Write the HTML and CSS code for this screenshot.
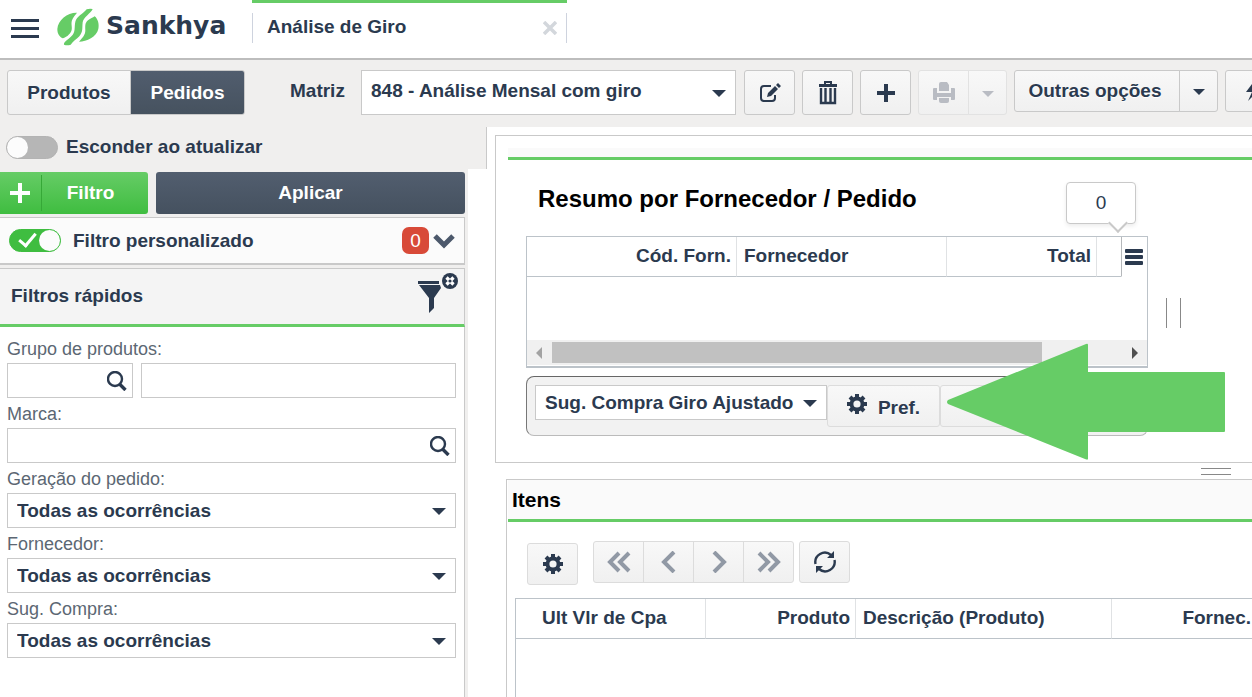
FILE: index.html
```html
<!DOCTYPE html>
<html lang="pt-BR">
<head>
    <meta charset="UTF-8">
    <meta name="viewport" content="width=device-width, initial-scale=1.0">
    <title>Análise de Giro</title>
    <link rel="stylesheet" href="styles.css">
</head>
<body>
    <!-- Shared icons -->
    <svg class="sprite" aria-hidden="true">
        <symbol id="search" viewBox="0 0 20 20">
            <circle cx="8" cy="8" r="7" fill="none" stroke="currentColor" stroke-width="2.4"/>
            <path d="M12.500 13l6 6" stroke="currentColor" stroke-width="3.400"/>
        </symbol>
        <symbol id="gear" viewBox="0 0 20 20">
            <path fill="none" stroke="currentColor" stroke-width="4" d="M10 0v4M10 16v4M0 10h4M16 10h4M3 3l3 3M14 14l3 3M17 3l-3 3M6 14l-3 3"/>
            <circle cx="10" cy="10" r="5.500" fill="none" stroke="currentColor" stroke-width="3.800"/>
        </symbol>
    </svg>

    <header class="topbar">
        <button class="menu-button" aria-label="Menu"><span></span><span></span><span></span></button>
        <a class="logo" href="#">
            <svg width="44" height="40" viewBox="170 22 132 120" fill="#66cc66">
                <path d="M233 39C205 38 176 60 174 88C174 103 181 112 190 116C200 114 212 104 216 94C220 84 214 74 218 62C221 52 228 46 233 39Z"/>
                <path d="M262 29Q270 26 280 28C274 42 252 52 250 68C248 84 252 96 240 110C230 120 222 124 214 135Q204 138 194 135C192 128 206 120 216 110C230 96 224 84 228 66C232 50 252 42 262 29Z"/>
                <path d="M286 50C296 58 300 74 297 88C292 112 262 126 239 126C250 114 258 106 258 92C258 80 256 70 266 62C274 56 280 54 286 50Z"/>
            </svg>
            <span>Sankhya</span>
        </a>
        <div class="tab">
            <div class="tab-inner">
                <span>Análise de Giro</span>
                <button class="tab-close" aria-label="Fechar">
                    <svg width="14" height="14" viewBox="0 0 14 14"><path d="M1 1l12 12M13 1L1 13" stroke="#d3d7dc" stroke-width="3.500"/></svg>
                </button>
            </div>
        </div>
    </header>

    <div class="toolbar">
        <div class="group views">
            <button class="btn">Produtos</button>
            <button class="btn dark">Pedidos</button>
        </div>
        <label class="matriz-label" for="matriz">Matriz</label>
        <div class="select matriz">
            <select id="matriz"><option>848 - Análise Mensal com giro</option></select>
        </div>
        <div class="tools">
            <button class="btn icon" aria-label="Editar">
                <svg width="22" height="20" viewBox="0 0 22 20">
                    <path d="M12 3H5Q2 3 2 6v9q0 3 3 3h8q3 0 3-3v-3" fill="none" stroke="currentColor" stroke-width="2"/>
                    <path d="M8 14l1-4 7-7 3 3-7 7zM17 2l2-2 3 3-2 2z" fill="currentColor"/>
                </svg>
            </button>
            <button class="btn icon" aria-label="Excluir">
                <svg width="18" height="24" viewBox="0 0 18 24" fill="none" stroke="currentColor">
                    <path d="M6 3V1h6v2" stroke-width="2"/>
                    <path d="M0 4.500h18" stroke-width="3"/>
                    <path d="M2 7v15h14V7M6.500 7v14M11.500 7v14" stroke-width="2.400"/>
                </svg>
            </button>
            <button class="btn icon" aria-label="Adicionar">
                <svg width="18" height="18" viewBox="0 0 18 18"><path d="M9 0v18M0 9h18" stroke="currentColor" stroke-width="4"/></svg>
            </button>
            <div class="group disabled">
                <button class="btn icon" disabled aria-label="Imprimir">
                    <svg width="22" height="21" viewBox="0 0 22 21" fill="currentColor">
                        <path d="M6 9V2q0-2 2-2h6l2 3v6z"/>
                        <path d="M0 7q0-1 1-1h3v5h14V6h3q1 0 1 1v10q0 1-1 1h-3v-3H4v3H1q-1 0-1-1z"/>
                        <path d="M6 16h10v3q0 2-2 2H8q-2 0-2-2z"/>
                    </svg>
                </button>
                <button class="btn caret" disabled aria-label="Opções de impressão"></button>
            </div>
            <div class="group short">
                <button class="btn">Outras opções</button>
                <button class="btn caret" aria-label="Mais opções"></button>
            </div>
            <div class="group short">
                <button class="btn icon wide" aria-label="Ações">
                    <svg width="16" height="22" viewBox="0 0 16 22"><path d="M9 0L0 12h6L2 21 14 9H8l4-9z" fill="currentColor"/></svg>
                </button>
            </div>
        </div>
    </div>

    <div class="page">
        <aside class="sidebar">
            <div class="hide-row">
                <input type="checkbox" class="switch" id="hide">
                <label for="hide">Esconder ao atualizar</label>
            </div>
            <div class="filters">
                <div class="filter-actions">
                    <button class="btn-filtro">
                        <span class="plus"><svg width="20" height="20" viewBox="0 0 20 20"><path d="M10 0v20M0 10h20" stroke="#fff" stroke-width="4"/></svg></span>
                        <span class="txt">Filtro</span>
                    </button>
                    <button class="btn-aplicar">Aplicar</button>
                </div>
                <div class="custom-filter">
                    <input type="checkbox" class="switch" id="custom" checked>
                    <label for="custom">Filtro personalizado</label>
                    <span class="badge">0</span>
                    <button class="expand" aria-label="Expandir">
                        <svg width="22" height="16" viewBox="0 0 22 16"><path d="M2 3l9 9 9-9" fill="none" stroke="#4c586b" stroke-width="5"/></svg>
                    </button>
                </div>
                <div class="quick-head">
                    <h2>Filtros rápidos</h2>
                    <button aria-label="Limpar filtros">
                        <svg width="40" height="42" viewBox="0 0 40 42">
                            <path d="M0 9h21v3H0zM1 13h21l1 3-7 10v10l-5 5V26z" fill="currentColor"/>
                            <circle cx="32" cy="9" r="8" fill="currentColor"/>
                            <path d="M28.500 5.500l7 7M35.500 5.500l-7 7" stroke="#fff" stroke-width="3.200"/>
                            <circle cx="32" cy="9" r="1.600" fill="currentColor"/>
                        </svg>
                    </button>
                </div>
                <form class="quick-filters">
                    <label for="grupo">Grupo de produtos:</label>
                    <div class="row">
                        <div class="field code">
                            <input type="text" id="grupo">
                            <button type="button" aria-label="Pesquisar grupo"><svg width="20" height="20"><use href="#search"/></svg></button>
                        </div>
                        <div class="field"><input type="text" aria-label="Descrição do grupo"></div>
                    </div>
                    <label for="marca">Marca:</label>
                    <div class="field">
                        <input type="text" id="marca">
                        <button type="button" aria-label="Pesquisar marca"><svg width="20" height="20"><use href="#search"/></svg></button>
                    </div>
                    <label for="geracao">Geração do pedido:</label>
                    <div class="select"><select id="geracao"><option>Todas as ocorrências</option></select></div>
                    <label for="fornecedor">Fornecedor:</label>
                    <div class="select"><select id="fornecedor"><option>Todas as ocorrências</option></select></div>
                    <label for="sug">Sug. Compra:</label>
                    <div class="select"><select id="sug"><option>Todas as ocorrências</option></select></div>
                </form>
            </div>
        </aside>

        <main class="content">
            <section class="panel resumo">
                <div class="strip"></div>
                <div class="resumo-body">
                    <div class="resumo-main">
                        <h1>Resumo por Fornecedor / Pedido</h1>
                        <div class="grid">
                            <table>
                                <colgroup><col class="c-cod"><col class="c-forn"><col class="c-total"><col class="c-pad"><col></colgroup>
                                <thead>
                                    <tr>
                                        <th class="right">Cód. Forn.</th>
                                        <th>Fornecedor</th>
                                        <th class="right">Total</th>
                                        <th class="pad"></th>
                                        <th class="menu-cell">
                                            <button class="grid-menu" aria-label="Colunas"><span></span><span></span><span></span></button>
                                            <div class="tip">0</div>
                                        </th>
                                    </tr>
                                </thead>
                            </table>
                            <div class="scrollbar"><i class="left"></i><div class="track"><div class="thumb"></div></div><i class="next"></i></div>
                        </div>
                        <div class="footer-bar">
                            <div class="select sugestao">
                                <select aria-label="Sugestão"><option>Sug. Compra Giro Ajustado</option></select>
                            </div>
                            <button class="btn light pref"><svg width="20" height="20"><use href="#gear"/></svg><span>Pref.</span></button>
                            <button class="btn light blank" aria-label="Gerar"></button>
                            <svg class="arrow" width="279" height="117" viewBox="0 0 279 117" aria-hidden="true">
                                <path d="M1 57L139 1Q141 0 141 2V29H277Q278 29 278 30V88Q278 89 277 89H141V116Q141 117 138 116L1 61Q-1 59 1 57Z" fill="#66cc66"/>
                            </svg>
                        </div>
                    </div>
                    <div class="split-v"></div>
                </div>
            </section>
            <div class="split-h"><span></span></div>
            <section class="panel itens">
                <h2>Itens</h2>
                <div class="itens-tools">
                    <button class="btn light icon gear-btn" aria-label="Configurar"><svg width="20" height="20"><use href="#gear"/></svg></button>
                    <div class="group nav">
                        <button class="btn light" aria-label="Primeiro"><svg width="24" height="22" viewBox="0 0 24 22"><path d="M12 2L3 11l9 9M22 2l-9 9 9 9"/></svg></button>
                        <button class="btn light" aria-label="Anterior"><svg width="24" height="22" viewBox="0 0 24 22"><path d="M17 1L7 11l10 10"/></svg></button>
                        <button class="btn light" aria-label="Próximo"><svg width="24" height="22" viewBox="0 0 24 22"><path d="M7 1l10 10L7 21"/></svg></button>
                        <button class="btn light" aria-label="Último"><svg width="24" height="22" viewBox="0 0 24 22"><path d="M2 2l9 9-9 9M12 2l9 9-9 9"/></svg></button>
                    </div>
                    <button class="btn light icon" aria-label="Atualizar">
                        <svg width="22" height="22" viewBox="0 0 22 22">
                            <path d="M1.500 13A9.500 9.500 0 0 1 17 4M20.500 9A9.500 9.500 0 0 1 5 18" fill="none" stroke="currentColor" stroke-width="2.400"/>
                            <path d="M20 0v7h-7zM2 22v-7h7z" fill="currentColor"/>
                        </svg>
                    </button>
                </div>
                <div class="itens-grid">
                    <table>
                        <colgroup><col class="c-ult"><col class="c-prod"><col class="c-desc"><col></colgroup>
                        <thead>
                            <tr>
                                <th class="indent">Ult Vlr de Cpa</th>
                                <th class="right">Produto</th>
                                <th>Descrição (Produto)</th>
                                <th class="right last">Fornec.</th>
                            </tr>
                        </thead>
                    </table>
                </div>
            </section>
        </main>
    </div>
</body>
</html>
```
FILE: styles.css
```css
* {
    box-sizing: border-box;
}
body {
    margin: 0;
    min-height: 100vh;
    display: flex;
    flex-direction: column;
    overflow: hidden;
    background: #fff;
    color: #2b3a4f;
    font: bold 19px "Liberation Sans", Arial, sans-serif;
}
button, input, select {
    font: inherit;
    color: inherit;
    margin: 0;
    padding: 0;
    border: 0;
    background: none;
}
svg {
    display: block;
    flex: none;
}
h1, h2 {
    margin: 0;
}
.sprite {
    position: absolute;
    width: 0;
    height: 0;
}

/* Top bar */
.topbar {
    display: flex;
    height: 60px;
    border-bottom: 2px solid #bdbdbd;
}
.menu-button {
    display: flex;
    flex-direction: column;
    gap: 5px;
    width: 28px;
    margin: 19px 0 0 11px;
}
.menu-button span {
    height: 3px;
    background: #2b3a4f;
}
.logo {
    display: flex;
    gap: 6px;
    width: 196px;
    margin-left: 17px;
    padding-top: 7px;
    color: #2b3a4f;
    font: bold 25px/38px "DejaVu Sans", sans-serif;
    text-decoration: none;
}
.tab {
    width: 315px;
    border-top: 3px solid #66cc66;
}
.tab-inner {
    display: flex;
    justify-content: space-between;
    align-items: center;
    height: 30px;
    margin-top: 10px;
    padding: 0 9px 0 14px;
    border: solid #ced3de;
    border-width: 0 1px;
}
.tab-inner span {
    line-height: 28px;
    padding-bottom: 2px;
}

/* Buttons */
.btn {
    display: flex;
    align-items: center;
    justify-content: center;
    height: 45px;
    border: 1px solid #c9c9c9;
    border-radius: 3px;
    background: linear-gradient(#f8f8f8, #f0f0f0);
    text-shadow: 0 1px 1px #fff;
}
.btn.icon {
    width: 51px;
}
.btn.wide {
    width: 57px;
}
.btn.dark {
    color: #fff;
    background: linear-gradient(#515d6e, #46525f);
    text-shadow: none;
}
.btn.light {
    height: 42px;
    border-color: #dcdcdc;
}
.btn.caret {
    width: 39px;
}
.btn.caret::after, .select::after {
    content: "";
    border: solid transparent;
    border-width: 7px 7px 0;
    border-top-color: #2b3a4f;
}
.btn.caret::after {
    border-width: 6px 6px 0;
    margin-top: 2px;
}
.group {
    display: flex;
    flex: none;
}
.group .btn + .btn {
    margin-left: -1px;
    border-top-left-radius: 0;
    border-bottom-left-radius: 0;
}
.group .btn:not(:last-child) {
    border-top-right-radius: 0;
    border-bottom-right-radius: 0;
}
.short .btn {
    height: 42px;
}
.short .btn:first-child:not(.icon) {
    width: 166px;
    padding-right: 4px;
}
.disabled .btn {
    color: #b9bcc3;
    border-color: #e2e2e2;
}
.disabled .btn.caret::after {
    border-top-color: #b9bcc3;
}

/* Selects */
.select {
    position: relative;
    height: 35px;
    border: 1px solid #c9c9c9;
    background: #fff;
}
.select select {
    appearance: none;
    width: 100%;
    height: 100%;
    padding: 0 32px 0 9px;
}
.select::after {
    position: absolute;
    right: 9px;
    top: 50%;
    margin-top: -3px;
    pointer-events: none;
}

/* Toolbar */
.toolbar {
    display: flex;
    height: 67px;
    padding: 10px 0 0 7px;
    background: #f0efee;
}
.views .btn {
    width: 124px;
}
.views .dark {
    width: 115px;
}
.matriz-label {
    flex: none;
    width: 71px;
    margin-left: 45px;
    line-height: 41px;
}
.matriz {
    flex: none;
    width: 375px;
    height: 45px;
}
.matriz select {
    padding-bottom: 4px;
}
.tools {
    display: flex;
    gap: 7px;
    margin-left: 8px;
}
.tools .btn {
    flex: none;
}

/* Page */
.page {
    display: flex;
    flex: 1;
}
.sidebar {
    display: flex;
    flex-direction: column;
    flex: none;
    width: 487px;
}
.hide-row {
    display: flex;
    align-items: center;
    gap: 8px;
    height: 42px;
    padding: 0 0 2px 6px;
    border-right: 1px solid #c9c9c9;
    background: #f0efee;
}
.switch {
    appearance: none;
    flex: none;
    display: flex;
    align-items: center;
    width: 52px;
    height: 23px;
    border: 1px solid #b3b3b3;
    border-radius: 12px;
    background: #b6b6b6;
}
.switch::after {
    content: "";
    width: 21px;
    height: 21px;
    border-radius: 50%;
    background: #fcfcfc;
}
.switch:checked {
    justify-content: space-between;
    border-color: #3fbd40;
    background: #3fbd40;
}
.switch:checked::before {
    content: "";
    width: 14px;
    height: 7px;
    margin: -5px 0 0 9px;
    border: solid #fff;
    border-width: 0 0 3px 3px;
    transform: rotate(-50deg);
}
.filters {
    display: flex;
    flex-direction: column;
    gap: 3px;
    flex: 1;
    width: 468px;
    padding: 3px 3px 0 0;
    background: #f0efee;
}
.filter-actions {
    display: flex;
    gap: 8px;
    color: #fff;
    text-shadow: 0 1px 2px #30404080;
}
.btn-filtro {
    display: flex;
    align-items: center;
    width: 148px;
    height: 42px;
    border-radius: 0 3px 3px 0;
    background: linear-gradient(#66cc66, #3fbd40);
}
.plus {
    display: flex;
    align-items: center;
    width: 42px;
    height: 36px;
    padding-left: 10px;
    border-right: 1px solid #36a837;
}
.txt {
    flex: 1;
    padding-right: 9px;
}
.btn-aplicar {
    flex: 1;
    border-radius: 3px;
    background: linear-gradient(#525e6f, #45515f);
}
.custom-filter {
    display: flex;
    align-items: center;
    height: 48px;
    padding: 0 9px;
    border: solid #c9c9c9;
    border-width: 1px 1px 2px 0;
    background: #fbfbfb;
}
.custom-filter label {
    flex: 1;
    margin-left: 12px;
}
.badge {
    width: 27px;
    border-radius: 7px;
    background: #d84a38;
    color: #fff;
    font-weight: normal;
    line-height: 27px;
    text-align: center;
}
.expand {
    margin-left: 4px;
}
.quick-head {
    display: flex;
    justify-content: space-between;
    align-items: center;
    height: 59px;
    padding: 0 6px 2px 11px;
    border-top: 1px solid #c9c9c9;
    border-right: 1px solid #c9c9c9;
    border-bottom: 3px solid #66cc66;
    background: #f4f4f4;
}
.quick-head h2 {
    font-size: 19px;
}
.quick-head button {
    padding-bottom: 6px;
}
.quick-filters {
    flex: 1;
    margin-top: -3px;
    padding: 8px 8px 0 7px;
    border-right: 1px solid #c9c9c9;
    background: #fff;
}
.quick-filters label {
    display: block;
    color: #5c6773;
    font-size: 18px;
    font-weight: normal;
    line-height: 28px;
}
.quick-filters .field, .quick-filters .select {
    margin-bottom: 2px;
}
.row {
    display: flex;
    gap: 8px;
}
.row .field {
    flex: 1;
    min-width: 0;
}
.row .code {
    flex: 0 0 126px;
}
.field {
    display: flex;
    align-items: center;
    height: 35px;
    padding: 0 5px;
    border: 1px solid #c9c9c9;
}
.field input {
    flex: 1;
    min-width: 0;
    height: 100%;
}

/* Content */
.content {
    flex: 1;
    min-width: 0;
    display: flex;
    flex-direction: column;
    padding: 8px 0 0 8px;
}
.panel {
    border: solid #c9c9c9;
    border-width: 1px 0 0 1px;
}
.resumo {
    height: 328px;
    padding: 12px 0 0 12px;
    border-bottom-width: 1px;
}
.strip {
    height: 12px;
    border-bottom: 3px solid #66cc66;
    background: #fafafa;
}
.resumo-body {
    display: flex;
    align-items: center;
    gap: 18px;
    padding-left: 18px;
}
.resumo-main {
    flex: 0 1 622px;
}
h1 {
    padding: 2px 0 0 12px;
    color: #000;
    font-size: 24px;
    line-height: 74px;
}
.grid {
    display: flex;
    flex-direction: column;
    justify-content: space-between;
    height: 132px;
    border: 1px solid #bcc3c9;
    border-bottom-width: 2px;
}
table {
    width: 100%;
    table-layout: fixed;
    border-collapse: separate;
    border-spacing: 0;
}
th {
    height: 40px;
    padding: 0 5px 2px 7px;
    border-right: 1px solid #e0e2e4;
    border-bottom: 1px solid #bcc3c9;
    text-align: left;
    white-space: nowrap;
}
.right {
    text-align: right;
}
.c-cod {
    width: 210px;
}
.c-forn {
    width: 210px;
}
.c-total {
    width: 150px;
}
.c-pad {
    width: 24px;
}
.pad {
    border-right: 0;
}
.menu-cell {
    position: relative;
    padding: 0 0 0 3px;
    border-right: 0;
    border-bottom-color: transparent;
    border-left: 1px solid #b5b8bb;
}
.grid-menu {
    display: flex;
    flex-direction: column;
    gap: 2px;
    width: 18px;
}
.grid-menu span {
    height: 4px;
    border-radius: 1px;
    background: #2b3a4f;
}
.tip {
    position: absolute;
    right: 11px;
    bottom: 52px;
    width: 70px;
    border: 1px solid #c9c9c9;
    border-radius: 4px;
    background: #fff;
    box-shadow: 0 2px 4px #00000014;
    font-weight: normal;
    line-height: 40px;
    text-align: center;
}
.tip::after {
    content: "";
    position: absolute;
    right: 10px;
    bottom: -7px;
    width: 12px;
    height: 12px;
    border: solid #c9c9c9;
    border-width: 0 2px 2px 0;
    background: #fff;
    transform: rotate(45deg);
}
.scrollbar {
    display: flex;
    align-items: center;
    height: 25px;
    margin-bottom: 1px;
    padding: 0 9px;
    background: #f0f0f0;
}
.scrollbar i {
    border: solid transparent;
    border-width: 6px 0;
}
.scrollbar .left {
    border-right: 6px solid #a3a3a3;
}
.scrollbar .next {
    border-left: 6px solid #505050;
}
.track {
    flex: 1;
    padding: 0 10px;
}
.thumb {
    width: 86%;
    height: 21px;
    background: #c1c1c1;
}
.footer-bar {
    position: relative;
    display: flex;
    height: 60px;
    margin-top: 8px;
    padding: 8px;
    border: 1px solid #bbb;
    border-top-color: #666;
    border-left-color: #777;
    border-radius: 8px;
    background: #f2f2f2;
}
.sugestao {
    width: 292px;
}
.footer-bar .pref {
    gap: 11px;
    width: 113px;
}
.pref svg {
    margin-top: -4px;
}
.pref span {
    padding-top: 4px;
}
.blank {
    width: 113px;
}
.arrow {
    position: absolute;
    left: 420px;
    top: -34px;
}
.split-v {
    width: 15px;
    height: 30px;
    margin-top: 30px;
    border: solid #888;
    border-width: 0 1px;
}
.split-h {
    display: flex;
    justify-content: flex-end;
    height: 16px;
    padding: 5px 21px 0 0;
}
.split-h span {
    width: 30px;
    height: 7px;
    border: solid #888;
    border-width: 1px 0;
}
.itens {
    flex: 1;
    display: flex;
    flex-direction: column;
    margin-left: 11px;
    padding-left: 1px;
}
.itens h2 {
    padding-left: 4px;
    border-bottom: 3px solid #66cc66;
    background: #fafafa;
    color: #000;
    font-size: 21px;
    line-height: 39px;
}
.itens-tools {
    display: flex;
    padding: 19px 0 0 19px;
}
.gear-btn {
    margin: 2px 15px 0 0;
}
.nav {
    margin-right: 5px;
}
.nav .btn {
    width: 51px;
}
.nav svg {
    fill: none;
    stroke: #9199a5;
    stroke-width: 4;
}
.itens-grid {
    flex: 1;
    margin: 13px 0 0 7px;
    border: solid #bcc3c9;
    border-width: 1px 0 0 1px;
}
.c-ult {
    width: 190px;
}
.c-prod {
    width: 150px;
}
.c-desc {
    width: 256px;
}
th.indent {
    padding-left: 26px;
}
th.last {
    padding-right: 1px;
    border-right: 0;
}
```
